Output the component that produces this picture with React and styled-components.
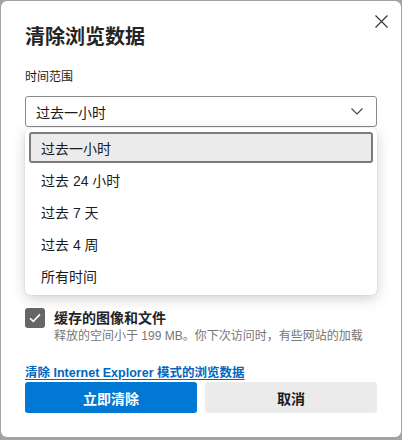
import React from "react"
import styled, { createGlobalStyle } from "styled-components"

const GlobalStyle = createGlobalStyle`
  html, body {
    margin: 0;
    padding: 0;
    background: #a3a3a3;
    width: 402px;
    height: 440px;
    overflow: hidden;
  }
  body {
    font-family: "Liberation Sans", "Noto Sans CJK SC", sans-serif;
    color: #1b1b1b;
  }
`

const Dialog = styled.div`
  position: relative;
  box-sizing: border-box;
  margin: 1px 0 0 1px;
  width: 400px;
  height: 436px;
  background: #ffffff;
  border-radius: 6px;
  padding: 22px 24px 24px 24px;
  display: flex;
  flex-direction: column;
`

const Title = styled.h1`
  margin: 0;
  font-size: 20px;
  line-height: 28px;
  font-weight: 700;
  color: #242424;
`

const CloseButton = styled.button`
  position: absolute;
  top: 12px;
  right: 12px;
  width: 16px;
  height: 16px;
  padding: 0;
  border: none;
  background: transparent;
  display: flex;
  align-items: center;
  justify-content: center;
`

const Label = styled.div`
  margin-top: 18px;
  font-size: 12px;
  line-height: 16px;
  color: #1b1b1b;
`

const SelectWrap = styled.div`
  position: relative;
  margin-top: 11px;
`

const Select = styled.div`
  box-sizing: border-box;
  height: 31px;
  border: 1px solid #8a8a8a;
  border-radius: 3px;
  padding: 0 13px 0 10px;
  display: flex;
  align-items: center;
  justify-content: space-between;
  font-size: 14px;
  color: #1b1b1b;
`

const Menu = styled.ul`
  position: absolute;
  z-index: 2;
  top: 32px;
  left: 0;
  right: 0;
  margin: 0;
  padding: 4px;
  list-style: none;
  background: #ffffff;
  border-radius: 6px;
  box-shadow: 0 4px 14px rgba(0, 0, 0, 0.18), 0 0 2px rgba(0, 0, 0, 0.12);
  display: flex;
  flex-direction: column;
  gap: 1px;
`

const MenuItem = styled.li`
  box-sizing: border-box;
  height: 31px;
  display: flex;
  align-items: center;
  padding-left: ${p => (p.$active ? "10px" : "12px")};
  font-size: 14px;
  color: #1b1b1b;
  border-radius: 3px;
  background: ${p => (p.$active ? "#ebebeb" : "transparent")};
  border: ${p => (p.$active ? "2px solid #7c7c7c" : "none")};
`

const DataList = styled.div`
  margin-top: 181px;
  height: 40px;
  overflow: hidden;
  display: flex;
  flex-direction: column;
`

const DataRow = styled.div`
  display: flex;
  gap: 9px;
`

const Check = styled.span`
  flex: none;
  width: 20px;
  height: 20px;
  border-radius: 3px;
  background: #666666;
  display: flex;
  align-items: center;
  justify-content: center;
`

const RowText = styled.div`
  width: 316px;
  display: flex;
  flex-direction: column;
`

const RowTitle = styled.div`
  font-size: 14px;
  line-height: 20px;
  font-weight: 700;
  color: #242424;
`

const RowDesc = styled.div`
  font-size: 12px;
  line-height: 16px;
  color: #767676;
`

const IeLink = styled.a`
  margin-top: 17px;
  align-self: flex-start;
  font-size: 12.5px;
  line-height: 18px;
  font-weight: 700;
  color: #0067c0;
  text-decoration: underline;
  text-underline-offset: 2px;
`

const Buttons = styled.div`
  display: grid;
  grid-template-columns: 1fr 1fr;
  gap: 8px;
`

const Button = styled.button`
  height: 31px;
  border: none;
  border-radius: 3px;
  font-family: inherit;
  font-size: 14px;
  font-weight: 700;
  background: ${p => (p.$primary ? "#0078d4" : "#ebebeb")};
  color: ${p => (p.$primary ? "#ffffff" : "#1b1b1b")};
`

const ranges = ["过去一小时", "过去 24 小时", "过去 7 天", "过去 4 周", "所有时间"]

const CheckMark = () => (
  <svg width="12" height="10" viewBox="0 0 12 10">
    <path d="M1 5.2 L4.3 8.4 L11 1.4" fill="none" stroke="#ffffff" strokeWidth="1.6" />
  </svg>
)

const App = () => (
  <>
    <GlobalStyle />
    <Dialog>
      <CloseButton>
        <svg width="13" height="13" viewBox="0 0 13 13">
          <path d="M0.5 0.5 L12.5 12.5 M12.5 0.5 L0.5 12.5" stroke="#333" strokeWidth="1.1" />
        </svg>
      </CloseButton>
      <Title>清除浏览数据</Title>
      <Label>时间范围</Label>
      <SelectWrap>
        <Select>
          <span>过去一小时</span>
          <svg width="12" height="7" viewBox="0 0 12 7">
            <path d="M0.5 0.5 L6 6 L11.5 0.5" fill="none" stroke="#444" strokeWidth="1.1" />
          </svg>
        </Select>
        <Menu>
          {ranges.map((r, i) => (
            <MenuItem key={r} $active={i === 0}>{r}</MenuItem>
          ))}
        </Menu>
      </SelectWrap>
      <DataList>
        <DataRow>
          <Check><CheckMark /></Check>
          <RowText>
            <RowTitle>缓存的图像和文件</RowTitle>
            <RowDesc>释放的空间小于 199 MB。你下次访问时，有些网站的加载</RowDesc>
          </RowText>
        </DataRow>
      </DataList>
      <IeLink href="#">清除 Internet Explorer 模式的浏览数据</IeLink>
      <Buttons>
        <Button $primary>立即清除</Button>
        <Button>取消</Button>
      </Buttons>
    </Dialog>
  </>
)

export default App
